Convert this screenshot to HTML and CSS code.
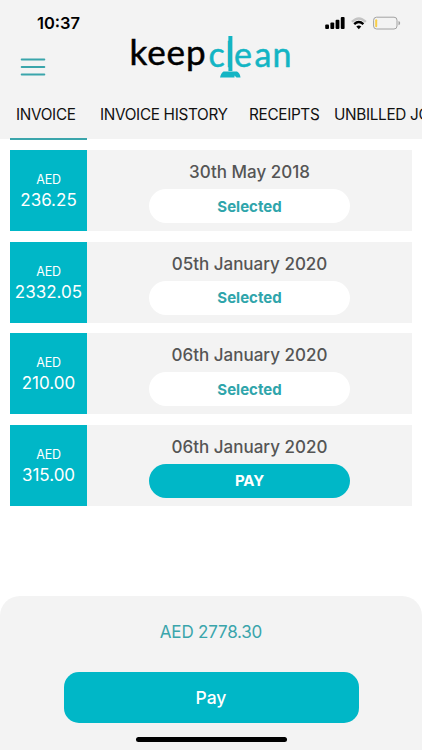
FILE: index.html
```html
<!DOCTYPE html>
<html lang="en">
<head>
  <meta charset="UTF-8" />
  <meta name="viewport" content="width=device-width, initial-scale=1.0" />
  <title>Keep Clean - Invoices</title>
  <link rel="stylesheet" href="styles.css">
</head>
<body>
  <header class="header">
    <div class="status-bar">
      <span class="time">10:37</span>
      <svg class="status-icons" width="76" height="16" viewBox="0 0 76 16">
        <g fill="#000">
          <rect x="0.2" y="9.6" width="3.8" height="4.4" rx="1" />
          <rect x="5.4" y="7.6" width="3.8" height="6.4" rx="1" />
          <rect x="10.6" y="4.8" width="3.8" height="9.2" rx="1" />
          <rect x="15.8" y="2" width="3.8" height="12" rx="1" />
        </g>
        <g fill="none" stroke-width="2.4">
          <path d="M27 6.8Q33.8 0 40.8 6.8" stroke="#c4c4c4" />
          <path d="M29.2 9.2Q33.8 5 38.4 9.2" stroke="#000" />
        </g>
        <path d="M31.3 11.5Q33.8 9.5 36.3 11.5L33.8 14.2Z" fill="#000" />
        <rect x="48.6" y="2.2" width="23.4" height="11.8" rx="3" fill="none" stroke="#a2a2a2" />
        <rect x="50.2" y="4.2" width="2" height="8" rx="1" fill="#f8ce46" />
        <path d="M73.5 6Q75.2 6.4 75.2 8.1T73.5 10.2Z" fill="#a2a2a2" />
      </svg>
    </div>
    <div class="top-row">
      <svg class="menu-icon" width="26" height="20" viewBox="0 0 26 20">
        <path d="M1.7 2.5H24.3M1.7 10H24.3M1.7 17.5H24.3" stroke="#3aa5ab" stroke-width="2" stroke-linecap="round" />
      </svg>
      <svg class="logo" width="170" height="50" viewBox="0 0 170 50">
        <text class="logo-keep" x="2.5" y="35" textLength="76">keep</text>
        <text class="logo-clean" x="81.5 98.5 107 127.5 145.5" y="37">clean</text>
        <!-- broom handle and head -->
        <rect x="101.4" y="6" width="4" height="35" fill="#13b5c4" />
        <path d="M96.5 41.5H110Q113 43 113.5 47.5H109.5L107.5 45.5V47.5H93Q94 43 96.5 41.5Z" fill="#13b5c4" />
      </svg>
    </div>
    <nav class="tabs">
      <a class="tab active">INVOICE</a>
      <a class="tab tab-history">INVOICE HISTORY</a>
      <a class="tab tab-receipts">RECEIPTS</a>
      <a class="tab">UNBILLED JOBS</a>
    </nav>
  </header>

  <main class="invoices">
    <div class="invoice">
      <div class="amount"><span class="currency">AED</span><span class="value">236.25</span></div>
      <div class="details">
        <div class="date">30th May 2018</div>
        <button class="pill">Selected</button>
      </div>
    </div>
    <div class="invoice">
      <div class="amount"><span class="currency">AED</span><span class="value">2332.05</span></div>
      <div class="details">
        <div class="date">05th January 2020</div>
        <button class="pill">Selected</button>
      </div>
    </div>
    <div class="invoice">
      <div class="amount"><span class="currency">AED</span><span class="value">210.00</span></div>
      <div class="details">
        <div class="date">06th January 2020</div>
        <button class="pill">Selected</button>
      </div>
    </div>
    <div class="invoice">
      <div class="amount"><span class="currency">AED</span><span class="value">315.00</span></div>
      <div class="details">
        <div class="date">06th January 2020</div>
        <button class="pill pill-pay">PAY</button>
      </div>
    </div>
  </main>

  <footer class="footer">
    <div class="total">AED 2778.30</div>
    <button class="pay-button">Pay</button>
    <div class="home-indicator"></div>
  </footer>
</body>
</html>
```
FILE: styles.css
```css
* {
  box-sizing: border-box;
}
body {
  margin: 0;
  height: 750px;
  display: flex;
  flex-direction: column;
  overflow: hidden;
  background: #fff;
  font-family: Inter, sans-serif;
}
button {
  border: none;
  padding: 0;
  font-family: inherit;
}
.header {
  height: 139px;
  background: #f3f3f3;
}
.status-bar {
  display: flex;
  justify-content: space-between;
  height: 30px;
  padding: 15px 21px 0 37px;
}
.time {
  font-size: 16.5px;
  line-height: 17px;
  font-weight: 600;
}
.status-icons {
  flex: none;
}
.top-row {
  display: flex;
  height: 60px;
}
.menu-icon {
  margin: 27px 0 0 20px;
}
.logo {
  margin-left: 81px;
}
.logo-keep,
.logo-clean {
  font-family: Lato, sans-serif;
  font-size: 35px;
  stroke: #000;
  stroke-width: 0.5px;
}
.logo-clean {
  font-size: 34px;
  fill: #13b5c4;
  stroke: #13b5c4;
}
.tabs {
  display: flex;
  height: 50px;
  padding-left: 10px;
  overflow: hidden;
  white-space: nowrap;
}
.tab {
  flex: none;
  padding-top: 15px;
  font-size: 15.3px;
  line-height: 20px;
  letter-spacing: -0.32px;
  color: #111;
}
.tab.active {
  width: 77px;
  padding-left: 6px;
  border-bottom: 2px solid #3aa5ab;
}
.tab-history {
  width: 149px;
  margin-left: 13px;
}
.tab-receipts {
  width: 85px;
}
.invoices {
  flex: 1;
  display: flex;
  flex-direction: column;
  gap: 10.3px;
  padding: 11px 10px 0;
}
.invoice {
  display: flex;
  height: 81.3px;
  background: #f3f3f3;
}
.amount {
  width: 77px;
  display: flex;
  flex-direction: column;
  align-items: center;
  padding-top: 21px;
  background: #00b7c7;
  color: #fff;
}
.currency {
  font-size: 12.5px;
  line-height: 17px;
  letter-spacing: -0.2px;
}
.value {
  font-size: 17px;
  line-height: 24px;
}
.details {
  flex: 1;
  display: flex;
  flex-direction: column;
  align-items: center;
}
.date {
  margin-top: 10px;
  font-size: 17px;
  line-height: 24px;
  font-weight: 500;
  color: #555;
}
.pill {
  width: 201px;
  height: 34px;
  margin-top: 5px;
  border-radius: 17px;
  background: #fff;
  color: #2fa5ab;
  font-size: 15px;
  font-weight: 700;
}
.pill-pay {
  background: #00b7c7;
  color: #fff;
  letter-spacing: -0.2px;
}
.footer {
  height: 154px;
  display: flex;
  flex-direction: column;
  align-items: center;
  border-radius: 20px 20px 0 0;
  background: #f3f3f3;
}
.total {
  margin-top: 25px;
  font-size: 17px;
  line-height: 22px;
  letter-spacing: -0.2px;
  color: #3aa5ab;
}
.pay-button {
  width: 295px;
  height: 51px;
  margin-top: 29px;
  border-radius: 15px;
  background: #00b7c7;
  color: #fff;
  font-size: 17.5px;
  font-weight: 500;
}
.home-indicator {
  width: 151px;
  height: 5px;
  margin-top: 14px;
  border-radius: 3px;
  background: #000;
}
```
